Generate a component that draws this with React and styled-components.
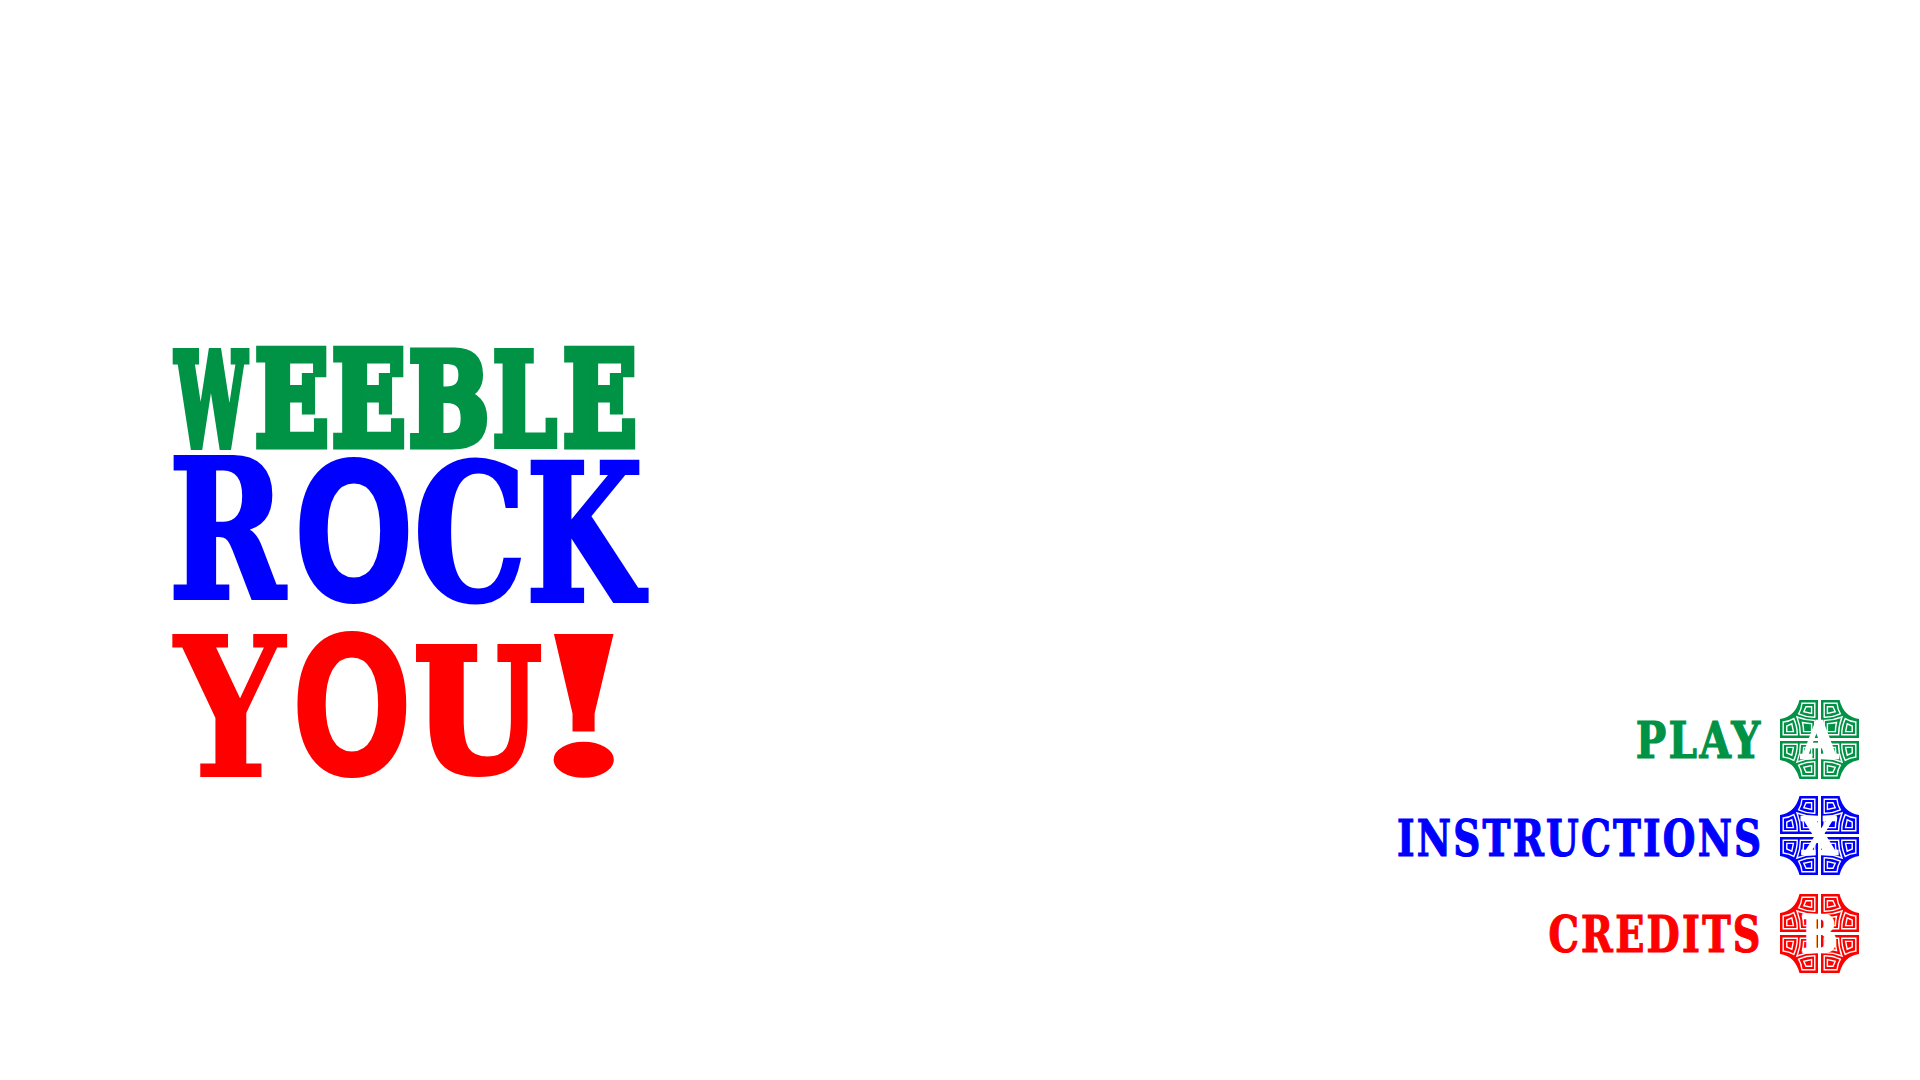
import React from 'react';
import styled, { createGlobalStyle } from 'styled-components';

const Global = createGlobalStyle`
  html, body { margin: 0; background: #fff; }
`;

const GREEN = '#009245';
const BLUE = '#0000ff';
const RED = '#ff0000';

const SERIF = '"DejaVu Serif", serif';
const SANS = '"DejaVu Sans", sans-serif';

const Screen = styled.main`
  box-sizing: border-box;
  width: 1920px;
  height: 1080px;
  padding: 340px 60px 107px 165px;
  display: flex;
  justify-content: space-between;
  overflow: hidden;
  background: #fff;
`;

const Logo = styled.svg`
  display: block;
  flex: none;
  width: 500px;
  height: 445px;
  overflow: visible;
`;

const Menu = styled.nav`
  display: flex;
  flex-direction: column;
  justify-content: flex-end;
  align-items: flex-end;
`;

const Item = styled.div`
  display: flex;
  align-items: center;
  gap: 17px;
  height: 79px;
  margin-top: ${(p) => p.$space}px;
  color: ${(p) => p.$color};
`;

const Label = styled.span`
  padding-top: ${(p) => p.$drop}px;
  font: bold 51px/79px ${SERIF};
  letter-spacing: 3px;
  white-space: nowrap;
  transform: scaleX(${(p) => p.$fit});
  transform-origin: 100% 50%;
  -webkit-text-stroke: 1.2px currentColor;
`;

const Badge = styled.svg`
  display: block;
  flex: none;
  width: 80px;
  height: 80px;
`;

// Each letter: character, left, right, top, bottom of its ink, font, weight, stroke
const WORDS = [
  {
    color: GREEN,
    letters: [
      ['W', 170, 252, 347, 449, SERIF, 700, 9],
      ['E', 255, 329, 345, 449, SERIF, 700, 9],
      ['E', 332, 406, 345, 449, SERIF, 700, 9],
      ['B', 409, 489, 347, 449, SERIF, 700, 9],
      ['L', 493, 559, 347, 449, SERIF, 700, 8],
      ['E', 563, 637, 345, 449, SERIF, 700, 9],
    ],
  },
  {
    color: BLUE,
    letters: [
      ['R', 173, 289, 455, 600, SERIF, 700, 4],
      ['O', 299, 410, 455, 604, SANS, 700, 0],
      ['C', 416, 522, 456, 604, SERIF, 700, 5],
      ['K', 530, 650, 459, 603, SERIF, 700, 4],
    ],
  },
  {
    color: RED,
    letters: [
      ['Y', 171, 289, 633, 777, SERIF, 700, 2],
      ['O', 297, 408, 629, 778, SANS, 700, 0],
      ['U', 415, 543, 643, 778, SERIF, 700, 8],
      ['!', 553, 614, 633, 778, SERIF, 700, 0],
    ],
  },
];

const pen = document.createElement('canvas').getContext('2d');

// Font size, advance and origin that make one letter fill its box
function fit([ch, left, right, top, bottom, family, weight, stroke]) {
  const probe = 400;
  pen.font = `${weight} ${probe}px ${family}`;
  const m = pen.measureText(ch);
  const l = left + stroke / 2;
  const r = right - stroke / 2;
  const t = top + stroke / 2;
  const b = bottom - stroke / 2;
  const inkW = m.actualBoundingBoxRight + m.actualBoundingBoxLeft;
  const inkH = m.actualBoundingBoxAscent + m.actualBoundingBoxDescent;
  const sx = (r - l) / inkW;
  const sy = (b - t) / inkH;
  return {
    x: l + m.actualBoundingBoxLeft * sx,
    y: b - m.actualBoundingBoxDescent * sy,
    size: probe * sy,
    advance: m.width * sx,
  };
}

function Word({ color, letters }) {
  return (
    <text fill={color} stroke={color}>
      {letters.map((l, i) => {
        const f = fit(l);
        return (
          <tspan
            key={i}
            x={f.x}
            y={f.y}
            textLength={f.advance}
            lengthAdjust="spacingAndGlyphs"
            fontFamily={l[5]}
            fontWeight={l[6]}
            fontSize={f.size}
            strokeWidth={l[7]}
          >
            {l[0]}
          </tspan>
        );
      })}
    </text>
  );
}

function Quarter({ turn }) {
  return (
    <g transform={turn}>
      <path d="M19.5 0 H38 V38 H0 V19 Q15 17 19.5 0 Z" fill="currentColor" />
      <g fill="none" stroke="#fff" strokeWidth="1.4">
        <path d="M22 3.2 H34.8 V17.2 Q27 17.5 18.6 13.8 Q21.5 9 22 3.2 Z" />
        <path d="M26 6.8 H31.6 V13.4 L23.8 11.8 Z" />
        <path d="M3.2 22 V34.8 H17.2 Q17.5 27 13.8 18.6 Q9 21.5 3.2 22 Z" />
        <path d="M6.8 26 V31.6 H13.4 L11.8 23.8 Z" />
        <path d="M17 17 Q26 20.5 34.8 20.4 V34.8 H20.4 Q20.5 26 17 17 Z" />
        <path d="M22.5 22.5 Q27 23.6 31.6 23.6 V31.6 H23.6 Q23.6 27 22.5 22.5 Z" />
      </g>
    </g>
  );
}

const BadgeLetter = styled.text`
  font: bold 50px ${SERIF};
  fill: #fff;
  stroke: #fff;
  stroke-width: 2.5px;
`;

function ButtonBadge({ letter }) {
  return (
    <Badge viewBox="0 0 80 80">
      <Quarter />
      <Quarter turn="matrix(-1 0 0 1 79 0)" />
      <Quarter turn="matrix(1 0 0 -1 0 79)" />
      <Quarter turn="matrix(-1 0 0 -1 79 79)" />
      <BadgeLetter x="21.5" y="57.5" textLength="36" lengthAdjust="spacingAndGlyphs">
        {letter}
      </BadgeLetter>
    </Badge>
  );
}

const ITEMS = [
  { label: 'PLAY', letter: 'A', color: GREEN, fit: 0.795, space: 0, drop: 2 },
  { label: 'INSTRUCTIONS', letter: 'X', color: BLUE, fit: 0.735, space: 17, drop: 5 },
  { label: 'CREDITS', letter: 'B', color: RED, fit: 0.75, space: 19, drop: 2 },
];

export default function App() {
  return (
    <Screen>
      <Global />
      <Logo viewBox="165 340 500 445">
        {WORDS.map((w, i) => (
          <Word key={i} {...w} />
        ))}
      </Logo>
      <Menu>
        {ITEMS.map((it) => (
          <Item key={it.label} $color={it.color} $space={it.space}>
            <Label $fit={it.fit} $drop={it.drop}>{it.label}</Label>
            <ButtonBadge letter={it.letter} />
          </Item>
        ))}
      </Menu>
    </Screen>
  );
}
